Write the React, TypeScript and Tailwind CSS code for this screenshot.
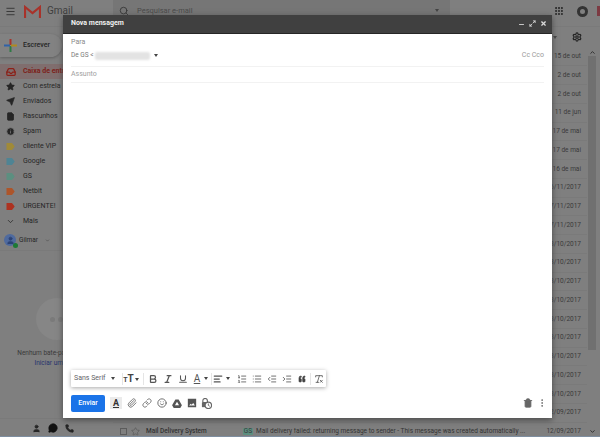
import React from "react";
import { Menu, Search, Grip, Settings, Star, Send, File, Info, Inbox, ChevronDown, ChevronUp, User, Phone, Minus, Bold, Italic, Underline, AlignLeft, ListOrdered, List, IndentDecrease, IndentIncrease, RemoveFormatting, Paperclip, Link, Smile, Trash2, EllipsisVertical, MessageCircle, Maximize2, X, Quote } from "lucide-react";

const dates = ["15 de out","2 de out","2 de out","11 de jun","17 de mai","17 de mai","16 de mai","16/11/2017","17/11/2017","17/11/2017","18/10/2017","18/10/2017","18/10/2017","18/10/2017","18/10/2017","18/10/2017","18/10/2017","18/10/2017","18/10/2017","12/09/2017","12/09/2017"];

const Tag = ({ c }: { c: string }) => (
  <svg width="9" height="7" viewBox="0 0 9 7"><path d="M0.5 0h5.5l2.7 3.5L6 7H0.5z" fill={c} /></svg>
);

const side: [React.ReactNode, string][] = [
  [<Star size={9} fill="#262626" stroke="#262626" />, "Com estrela"],
  [<Send size={9} fill="#262626" stroke="#262626" />, "Enviados"],
  [<File size={9} fill="#262626" stroke="#262626" />, "Rascunhos"],
  [<Info size={9} fill="#262626" stroke="#7f7f7f" />, "Spam"],
  [<Tag c="#a08a38" />, "cliente VIP"],
  [<Tag c="#4f8494" />, "Google"],
  [<Tag c="#5c8f80" />, "GS"],
  [<Tag c="#ad552a" />, "Netbit"],
  [<Tag c="#ad3220" />, "URGENTE!"],
  [<ChevronDown size={9} stroke="#262626" />, "Mais"],
];

const Sep = () => <div className="w-px h-[12px] bg-[#e5e5e5] shrink-0" />;
const Caret = ({ className = "" }: { className?: string }) => (
  <div className={`w-0 h-0 border-x-[2px] border-x-transparent border-t-[3px] border-t-[#444444] ${className}`} />
);
const Cell = ({ children }: { children: React.ReactNode }) => (
  <div className="w-[15px] h-full flex items-center justify-center shrink-0">{children}</div>
);

export default function App() {
  return (
    <div className="relative w-[600px] h-[437px] overflow-hidden bg-[#7f7f7f] text-[#262626] text-[7px] leading-none font-['Roboto','Liberation_Sans',sans-serif]">
      {/* Gmail top bar */}
      <div className="flex items-start h-[27px] border-b border-[#7a7a7a]">
        <div className="w-[113px] flex items-center h-[22px] pl-[5px] gap-[8px] shrink-0">
          <Menu size={11} stroke="#333333" />
          <svg width="17" height="13" viewBox="0 0 17 13">
            <path d="M1 13V2l7.5 6L16 2v11" fill="none" stroke="#a8322a" strokeWidth="2.2" />
          </svg>
          <span className="text-[10px] text-[#404040] ml-[-2px]">Gmail</span>
        </div>
        <div className="w-[339px] h-[24px] bg-[#767676] flex items-center pl-[6px] gap-[8px] pb-[3px]">
          <Search size={10} stroke="#333333" />
          <span className="text-[7.5px] text-[#4a4a4a] flex-1">Pesquisar e-mail</span>
          <Caret className="mr-[11px]" />
        </div>
        <div className="flex-1 flex items-center h-[22px] pl-[104px]">
          <Grip size={10} stroke="#262626" strokeWidth={3} className="shrink-0" />
          <div className="w-[11px] h-[11px] rounded-full bg-[#333333] flex items-center justify-center ml-[13px] shrink-0">
            <div className="w-[5px] h-[5px] rounded-full bg-[#808080]" />
          </div>
          <div className="w-[3px] h-[10px] bg-[#7c3a42] ml-[9px] shrink-0" />
        </div>
      </div>

      <div className="flex h-[410px]">
        {/* Sidebar */}
        <aside className="w-[113px] shrink-0 flex flex-col bg-[#7f7f7f]">
          <div className="h-[36px] flex items-center shrink-0">
            <div className="w-[62px] h-[23px] rounded-r-[12px] bg-[#828282] shadow-[0_1px_3px_#5f5f5f] flex items-center pl-[4px] gap-[6px]">
              <svg width="13" height="13" viewBox="0 0 13 13" className="shrink-0">
                <rect x="5.5" y="0" width="2" height="6" fill="#a8322a" />
                <rect x="5.5" y="7" width="2" height="6" fill="#2f7a45" />
                <rect x="0" y="5.5" width="6" height="2" fill="#2f62a8" />
                <rect x="7" y="5.5" width="6" height="2" fill="#b08a1e" />
              </svg>
              <span className="font-medium">Escrever</span>
            </div>
          </div>
          <div className="flex items-center h-[15px] bg-[#806e6e] text-[#7c1f1a] font-bold pl-[6px] rounded-r-[8px] mt-[1px] shrink-0">
            <span className="w-[17px] flex"><Inbox size={10} stroke="#8c2018" strokeWidth={3} /></span>
            <span className="whitespace-nowrap">Caixa de entrada</span>
          </div>
          {side.map(([icon, label]) => (
            <div key={label} className="flex items-center h-[15px] pl-[6px] shrink-0">
              <span className="w-[17px] flex">{icon}</span>
              <span>{label}</span>
            </div>
          ))}
          <div className="flex items-center h-[21px] mt-[1px] pl-[4px] border-b border-[#7a7a7a] shrink-0">
            <div className="relative w-[12px] h-[12px] rounded-full bg-[#4f6a9e] flex items-center justify-center shrink-0">
              <User size={9} fill="#2c4376" stroke="#2c4376" />
              <div className="absolute right-[-2px] bottom-[-2px] w-[5px] h-[5px] rounded-full bg-[#1e7a35]" />
            </div>
            <span className="text-[6.5px] ml-[3px]">Gilmar</span>
            <ChevronDown size={5} stroke="#333333" className="ml-[7px]" />
          </div>
          <div className="flex-1 flex flex-col items-center pt-[47px]">
            <div className="w-[42px] h-[42px] rounded-full bg-[#868686] flex items-center justify-center">
              <span className="flex gap-[3px]">
                <span className="w-[5px] h-[5px] rounded-full bg-[#7a7a7a]" />
                <span className="w-[5px] h-[5px] rounded-full bg-[#7a7a7a]" />
              </span>
            </div>
            <span className="mt-[10px] text-[6.5px] text-[#3a3a3a] whitespace-nowrap">Nenhum bate-papo recente</span>
            <span className="mt-[3px] text-[6.5px] text-[#26346e] whitespace-nowrap">Iniciar um novo</span>
          </div>
          <div className="h-[19px] flex items-center justify-center gap-[7px] border-t border-[#7a7a7a] pr-[8px] shrink-0">
            <User size={9} fill="#262626" stroke="#262626" />
            <MessageCircle size={10} fill="#111111" stroke="#111111" />
            <Phone size={9} fill="#262626" stroke="#262626" />
          </div>
        </aside>

        {/* Mail list */}
        <main className="flex-1 min-w-0 flex flex-col">
          <div className="h-[20.5px] flex items-center justify-end pr-[18px] gap-[15px] shrink-0">
            <Caret />
            <Settings size={10} stroke="#262626" strokeWidth={3} />
          </div>
          <div className="flex flex-1 min-h-0">
            <div className="flex-1 flex flex-col min-w-0">
              {dates.map((d, i) => (
                <div key={i} className="h-[18.75px] shrink-0 flex items-center border-b border-[#7a7a7a] pl-[7px] text-[6.5px] text-[#3a3a3a] overflow-hidden">
                  {i === dates.length - 1 && (
                    <>
                      <div className="w-[7px] h-[7px] border border-[#5c5c5c] shrink-0" />
                      <Star size={9} stroke="#5c5c5c" className="ml-[4px] shrink-0" />
                      <span className="w-[97px] ml-[6px] text-[#333333] font-medium whitespace-nowrap shrink-0">Mail Delivery System</span>
                      <span className="w-[10px] bg-[#5c8f80] text-center rounded-[1px] shrink-0">GS</span>
                      <span className="ml-[3px] text-[#333333] whitespace-nowrap truncate min-w-0 flex-1">Mail delivery failed: returning message to sender - This message was created automatically ...</span>
                    </>
                  )}
                  <span className="ml-auto pl-[20px] pr-[6px] whitespace-nowrap shrink-0">{d}</span>
                </div>
              ))}
            </div>
            <div className="w-[13px] pr-[3px] flex flex-col items-center shrink-0">
              <ChevronUp size={7} stroke="#262626" strokeWidth={3} className="mt-[1px] shrink-0" />
              <div className="w-[8px] h-[294px] bg-[#707070] shrink-0" />
              <div className="flex-1" />
              <ChevronDown size={7} stroke="#262626" strokeWidth={3} className="mb-[2px] shrink-0" />
            </div>
          </div>
        </main>
      </div>

      {/* Compose window overlay */}
      <section className="absolute left-[63px] top-[15px] w-[489px] h-[403px] bg-white flex flex-col shadow-[0_2px_6px_#4a4a4a]">
        <header className="h-[18.5px] bg-[#404040] border-b border-[#262626] flex items-center pl-[8px] pr-[5px] gap-[4px] shrink-0">
          <span className="font-bold text-[#f0f0f0] flex-1">Nova mensagem</span>
          <Minus size={7} stroke="#d9d9d9" strokeWidth={3} className="mt-[2px]" />
          <Maximize2 size={7} stroke="#d9d9d9" strokeWidth={3} />
          <X size={7} stroke="#d9d9d9" strokeWidth={4} />
        </header>
        <div className="px-[8px] flex flex-col flex-1 min-h-0">
          <div className="h-[13px] mt-[2px] flex items-center text-[#8a8a8a] shrink-0">Para</div>
          <div className="h-[18px] pb-[3px] flex items-center border-b border-[#f2f2f2] text-[#7a7a7a] shrink-0">
            <span className="text-[6.5px]">De GS &lt;</span>
            <span className="w-[55px] h-[8px] ml-[1px] rounded-[2px] bg-[#e3e3e3] blur-[1px]" />
            <Caret className="ml-[4px]" />
            <span className="ml-auto text-[#9a9a9a]">Cc Cco</span>
          </div>
          <div className="h-[16px] flex items-center border-b border-[#f2f2f2] text-[#a0a0a0] shrink-0">Assunto</div>
          <div className="flex-1" />
          <div className="w-[255px] h-[17px] flex items-center shadow-[0_1px_4px_#a8a8a8] rounded-[1px] pl-[3px] text-[#5f6368] shrink-0">
            <span className="w-[35px] whitespace-nowrap shrink-0">Sans Serif</span>
            <div className="w-[8px] flex justify-center shrink-0"><Caret /></div>
            <div className="w-[5px] shrink-0" />
            <Sep />
            <div className="w-[16px] flex items-end justify-center font-bold text-[#444444] shrink-0">
              <span className="text-[7px]">T</span><span className="text-[10px]">T</span><Caret className="ml-[1px] mb-[3px]" />
            </div>
            <div className="w-[4px] shrink-0" />
            <Sep />
            <div className="w-px shrink-0" />
            <Cell><Bold size={10} stroke="#555555" strokeWidth={3} /></Cell>
            <Cell><Italic size={10} stroke="#555555" strokeWidth={3} /></Cell>
            <Cell><Underline size={10} stroke="#555555" strokeWidth={2.5} /></Cell>
            <div className="w-[18px] flex items-center shrink-0">
              <span className="w-[14px] text-center text-[10px] underline text-[#555555]">A</span><Caret />
            </div>
            <div className="w-[3px] shrink-0" />
            <Sep />
            <div className="w-[12px] flex justify-center shrink-0"><AlignLeft size={10} stroke="#555555" strokeWidth={3} /></div>
            <Caret className="ml-[2px] shrink-0" />
            <div className="w-[4px] shrink-0" />
            <Cell><ListOrdered size={10} stroke="#555555" /></Cell>
            <Cell><List size={10} stroke="#555555" /></Cell>
            <Cell><IndentDecrease size={10} stroke="#555555" /></Cell>
            <Cell><IndentIncrease size={10} stroke="#555555" /></Cell>
            <Cell><Quote size={8} fill="#444444" stroke="#444444" className="rotate-180" /></Cell>
            <div className="w-px shrink-0" />
            <Sep />
            <Cell><RemoveFormatting size={10} stroke="#555555" /></Cell>
          </div>
          <div className="h-[30px] flex items-center shrink-0 mt-[1px]">
            <button className="w-[34px] h-[17px] bg-[#1a73e8] text-white rounded-[2px] font-medium shrink-0">Enviar</button>
            <div className="ml-[5px] w-[12px] h-[12px] bg-[#ebebeb] flex items-center justify-center text-[9px] font-bold underline text-[#333333] shrink-0">A</div>
            <div className="w-[2px] shrink-0" />
            <Cell><Paperclip size={10} stroke="#666666" /></Cell>
            <Cell><Link size={10} stroke="#666666" /></Cell>
            <Cell><Smile size={10} stroke="#555555" /></Cell>
            <Cell>
              <svg width="10" height="9" viewBox="0 0 24 22">
                <path d="M8 1h8l8 14-4 7H4l-4-7zM12 7l-5 8h10z" fill="#555555" fillRule="evenodd" />
              </svg>
            </Cell>
            <Cell>
              <svg width="10" height="10" viewBox="0 0 24 24">
                <path d="M2 2h20v20H2zM5 18h14l-4-6-4 4-2-2z" fill="#555555" fillRule="evenodd" />
              </svg>
            </Cell>
            <Cell>
              <svg width="11" height="11" viewBox="0 0 24 24">
                <path d="M4 10h10V6a5 5 0 0 0-10 0z" fill="none" stroke="#666666" strokeWidth="2.5" />
                <path d="M2 10h14v10H2z" fill="#666666" />
                <circle cx="16" cy="16" r="7" fill="#ffffff" stroke="#666666" strokeWidth="2.5" />
                <path d="M16 12v4l3 2" fill="none" stroke="#666666" strokeWidth="2" />
              </svg>
            </Cell>
            <div className="flex-1" />
            <Trash2 size={10} fill="#666666" stroke="#666666" />
            <EllipsisVertical size={10} stroke="#666666" className="ml-[4px] mr-[-3px]" />
          </div>
        </div>
      </section>
      <div className="absolute left-0 right-0 bottom-0 h-px bg-[#7e8ea0]" />
    </div>
  );
}
